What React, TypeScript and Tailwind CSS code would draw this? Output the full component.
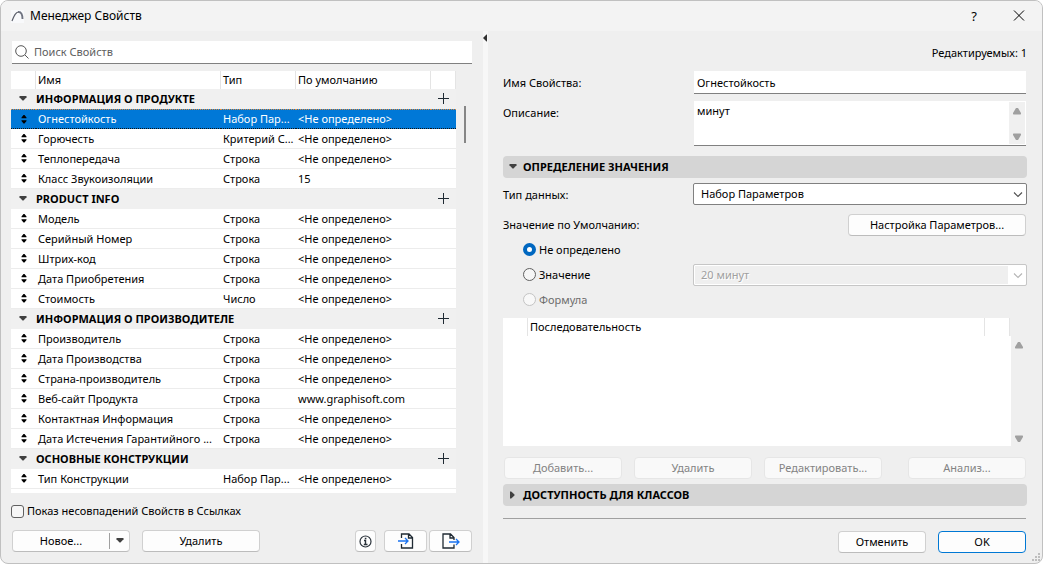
import { Fragment, useState } from "react";

const UNDEFINED = "<Не определено>";

const groups = [
  {
    title: "ИНФОРМАЦИЯ О ПРОДУКТЕ",
    rows: [
      { name: "Огнестойкость", type: "Набор Пар...", value: UNDEFINED },
      { name: "Горючесть", type: "Критерий С...", value: UNDEFINED },
      { name: "Теплопередача", type: "Строка", value: UNDEFINED },
      { name: "Класс Звукоизоляции", type: "Строка", value: "15" },
    ],
  },
  {
    title: "PRODUCT INFO",
    rows: [
      { name: "Модель", type: "Строка", value: UNDEFINED },
      { name: "Серийный Номер", type: "Строка", value: UNDEFINED },
      { name: "Штрих-код", type: "Строка", value: UNDEFINED },
      { name: "Дата Приобретения", type: "Строка", value: UNDEFINED },
      { name: "Стоимость", type: "Число", value: UNDEFINED },
    ],
  },
  {
    title: "ИНФОРМАЦИЯ О ПРОИЗВОДИТЕЛЕ",
    rows: [
      { name: "Производитель", type: "Строка", value: UNDEFINED },
      { name: "Дата Производства", type: "Строка", value: UNDEFINED },
      { name: "Страна-производитель", type: "Строка", value: UNDEFINED },
      { name: "Веб-сайт Продукта", type: "Строка", value: "www.graphisoft.com" },
      { name: "Контактная Информация", type: "Строка", value: UNDEFINED },
      { name: "Дата Истечения Гарантийного ...", type: "Строка", value: UNDEFINED },
    ],
  },
  {
    title: "ОСНОВНЫЕ КОНСТРУКЦИИ",
    rows: [{ name: "Тип Конструкции", type: "Набор Пар...", value: UNDEFINED }],
  },
];

const buttonStyle =
  "flex h-[22px] items-center justify-center rounded border border-[#d0d0d0] border-b-[#bcbcbc] bg-[#fdfdfd] disabled:border-[#e6e6e6] disabled:bg-[#f9f9f9] disabled:text-[#838383]";

function Triangle({ className }: { className?: string }) {
  return (
    <svg className={className} width="8" height="6" viewBox="0 0 8 6" fill="#404040">
      <path d="M.5 0h7v1.200L4.500 4.500h-1L.5 1.200z" />
    </svg>
  );
}

function ScrollArrow({ className }: { className?: string }) {
  return (
    <svg className={className} width="8" height="7" viewBox="0 0 8 7" fill="#a0a0a0">
      <path d="M3 0h2l3 5v1l-.5.5h-7L0 6V5z" />
    </svg>
  );
}

function Chevron({ color }: { color: string }) {
  return (
    <svg
      className="pointer-events-none absolute top-2 right-1"
      width="10"
      height="7"
      viewBox="0 0 10 7"
      fill="none"
      stroke={color}
      strokeWidth="1.1"
    >
      <path d="M1 1.500l4 4 4-4" />
    </svg>
  );
}

function PropertyTable() {
  const [selected, setSelected] = useState("Огнестойкость");

  return (
    <table className="w-full table-fixed border-separate border-spacing-0 bg-white">
      <colgroup>
        <col className="w-[25px]" />
        <col />
        <col className="w-[75px]" />
        <col className="w-[135px]" />
        <col className="w-[25px]" />
      </colgroup>
      <thead>
        <tr className="h-[18px] text-left">
          <th className="border-r border-[#e4e4e4] p-0" />
          <th className="border-r border-[#e4e4e4] p-0 pl-[2px] font-normal">Имя</th>
          <th className="border-r border-[#e4e4e4] p-0 pl-[2px] font-normal">Тип</th>
          <th className="border-r border-[#e4e4e4] p-0 pl-[2px] font-normal">По умолчанию</th>
          <th className="border-r border-[#e4e4e4] p-0" />
        </tr>
      </thead>
      <tbody>
        {groups.map((group) => (
          <Fragment key={group.title}>
            <tr className="h-5 bg-[#f0f0f0]">
              <td className="p-0">
                <Triangle className="ml-2" />
              </td>
              <th className="p-0 text-left font-bold" colSpan={3}>
                {group.title}
              </th>
              <td className="p-0">
                <button className="block pl-[6px]" type="button" aria-label="Добавить свойство">
                  <svg width="12" height="12" viewBox="0 0 12 12" stroke="#1f2a33">
                    <path d="M1 5.500h11M6.500 0v11" />
                  </svg>
                </button>
              </td>
            </tr>
            {group.rows.map((row) => {
              const active = row.name === selected;
              const line = active
                ? "border-y border-dotted border-t-[#e08a3c] border-b-[#111111] p-0"
                : "border-b border-[#ececec] p-0";
              return (
                <tr
                  className={active ? "h-5 bg-[#0078d7] text-white" : "h-5"}
                  key={row.name}
                  onClick={() => setSelected(row.name)}
                >
                  <td className={line}>
                    <svg className="ml-[10px]" width="6" height="9" viewBox="0 0 6 9" fill="#000000">
                      <path d="M2.500 0h1l2 2.500V3.200h-5V2.500zM.5 5.300h5V6L3.500 8.500h-1L.5 6z" />
                    </svg>
                  </td>
                  <td className={line}>
                    <div className="pl-[2px] whitespace-nowrap">{row.name}</div>
                  </td>
                  <td className={line}>
                    <div className="pl-[2px] whitespace-nowrap">{row.type}</div>
                  </td>
                  <td className={line}>
                    <div className="pl-[2px] whitespace-nowrap">{row.value}</div>
                  </td>
                  <td className={line} />
                </tr>
              );
            })}
          </Fragment>
        ))}
      </tbody>
    </table>
  );
}

function PropertyList() {
  return (
    <section className="flex min-w-0 flex-col pt-[10px] pr-[11px] pl-[10px]">
      <label className="ml-[1px] flex h-[23px] items-center gap-[5px] border-b border-[#808080] bg-white pl-[3px]">
        <svg width="14" height="14" viewBox="0 0 14 14" fill="none" stroke="#555555">
          <circle cx="6" cy="6" r="5.300" />
          <path d="M10 10l3.500 3.500" />
        </svg>
        <input
          className="min-w-0 flex-1 outline-none placeholder:text-[#606060]"
          type="text"
          aria-label="Поиск Свойств"
          placeholder="Поиск Свойств"
        />
      </label>

      <div className="mt-[7px] flex">
        <div className="min-w-0 flex-1 bg-white pb-1">
          <PropertyTable />
        </div>
        <div className="w-4 pt-[35px] pl-2">
          <div className="h-[37px] w-[2px] bg-[#868686]" />
        </div>
      </div>

      <label className="mt-[10px] flex h-4 items-center gap-[3px]">
        <input
          className="size-[13px] appearance-none rounded-[3px] border border-[#606060] bg-[#f6f6f6] checked:bg-[#0067c0]"
          type="checkbox"
        />
        Показ несовпадений Свойств в Ссылках
      </label>

      <div className="mt-[11px] ml-[1px] flex items-center">
        <div className={`${buttonStyle} w-[118px]`}>
          <button className="h-full flex-1" type="button">
            Новое...
          </button>
          <button
            className="my-[2px] flex h-4 w-5 items-center justify-center border-l border-[#a0a0a0]"
            type="button"
            aria-label="Варианты создания"
          >
            <Triangle />
          </button>
        </div>
        <button className={`${buttonStyle} ml-3 w-[118px]`} type="button">
          Удалить
        </button>
        <div className="ml-auto flex gap-[2px]">
          <button className={`${buttonStyle} mr-[6px] w-[21px]`} type="button" aria-label="Сведения">
            <svg className="shrink-0" width="13" height="13" viewBox="0 0 13 13" fill="none" stroke="#2b333b">
              <circle cx="6.500" cy="6.500" r="5.500" strokeWidth="1.200" />
              <path d="M5 5.500h1.500V10M4.800 9.500h3.700M5.800 3.500h1.600" strokeWidth="1.400" />
            </svg>
          </button>
          <button className={`${buttonStyle} w-[43px]`} type="button" aria-label="Импорт">
            <svg width="16" height="16" viewBox="0 0 16 16" fill="none" stroke="#1f2a33" strokeWidth="1.300">
              <path d="M3.500 5V1h7.500l3.500 3.500V15h-11v-4M10.500 1v4h4" />
              <path d="M0 8h10M7 5l3 3-3 3" stroke="#1a73f0" />
            </svg>
          </button>
          <button className={`${buttonStyle} w-[43px]`} type="button" aria-label="Экспорт">
            <svg width="18" height="16" viewBox="0 0 18 16" fill="none" stroke="#1f2a33" strokeWidth="1.300">
              <path d="M12 7V4.500L8.500 1H1v14h11v-3.500M8 1v4h4" />
              <path d="M7 9h10M14 6l3 3-3 3" stroke="#1a73f0" />
            </svg>
          </button>
        </div>
      </div>
    </section>
  );
}

function PropertyDetails() {
  const [valueMode, setValueMode] = useState("undefined");

  return (
    <section className="flex min-w-0 flex-col px-[15px] pt-3 pb-[10px]">
      <p className="h-5 text-right leading-5">Редактируемых: 1</p>

      <div className="mt-2 grid grid-cols-[190px_minmax(0,1fr)] gap-y-[7px]">
        <label className="leading-[23px]" htmlFor="name">
          Имя Свойства:
        </label>
        <input
          className="mx-[1px] h-[23px] border-b border-[#808080] bg-white px-[3px] outline-none"
          id="name"
          type="text"
          defaultValue="Огнестойкость"
        />
        <label className="leading-[23px]" htmlFor="description">
          Описание:
        </label>
        <div className="mx-[1px] flex h-[45px] border-b border-[#808080] bg-white">
          <textarea
            className="min-w-0 flex-1 resize-none overflow-hidden px-[3px] pt-[2px] outline-none"
            id="description"
            defaultValue="минут"
          />
          <div className="my-[1px] mr-[1px] flex w-4 flex-col items-center justify-between bg-[#f0f0f0] pt-[6px] pb-1">
            <ScrollArrow />
            <ScrollArrow className="rotate-180" />
          </div>
        </div>
      </div>

      <button
        className="mt-[10px] flex h-[22px] items-center gap-[6px] rounded bg-[#d5d5d5] pl-[6px] font-bold"
        type="button"
        aria-expanded="true"
      >
        <Triangle />
        ОПРЕДЕЛЕНИЕ ЗНАЧЕНИЯ
      </button>

      <div className="mt-[5px] grid grid-cols-[190px_minmax(0,1fr)]">
        <label className="leading-[23px]" htmlFor="data-type">
          Тип данных:
        </label>
        <div className="relative">
          <select
            className="block h-[22px] w-full appearance-none rounded-[2px] border border-[#808080] bg-white pl-[7px]"
            id="data-type"
          >
            <option>Набор Параметров</option>
          </select>
          <Chevron color="#505050" />
        </div>
      </div>

      <div className="mt-2 flex items-center justify-between">
        <span id="default-value">Значение по Умолчанию:</span>
        <button className={`${buttonStyle} mr-[1px] w-[178px]`} type="button">
          Настройка Параметров...
        </button>
      </div>

      <div
        className="mt-[1px] grid grid-cols-[190px_minmax(0,1fr)] items-center"
        role="radiogroup"
        aria-labelledby="default-value"
      >
        <label className="col-span-2 ml-5 flex h-[25px] items-center gap-[3px]">
          <input
            className="size-[13px] appearance-none rounded-full border border-[#606060] bg-[#f6f6f6] checked:border-4 checked:border-[#0067c0] checked:bg-white"
            type="radio"
            name="mode"
            checked={valueMode === "undefined"}
            onChange={() => setValueMode("undefined")}
          />
          Не определено
        </label>
        <label className="ml-5 flex h-[25px] items-center gap-[3px]">
          <input
            className="size-[13px] appearance-none rounded-full border border-[#606060] bg-[#f6f6f6] checked:border-4 checked:border-[#0067c0] checked:bg-white"
            type="radio"
            name="mode"
            checked={valueMode === "value"}
            onChange={() => setValueMode("value")}
          />
          Значение
        </label>
        <div className="relative">
          <select
            className="block h-[22px] w-full appearance-none rounded-[2px] border border-[#c6c6c6] bg-[#efefef] pl-[7px] text-[#a0a0a0] opacity-100 shadow-[inset_0_0_0_1px_#ffffff,inset_-18px_0_0_#ffffff] [text-shadow:1px_1px_#ffffff]"
            aria-label="Значение по Умолчанию"
            disabled
          >
            <option>20 минут</option>
          </select>
          <Chevron color="#b4b4b4" />
        </div>
        <label className="col-span-2 ml-5 flex h-[25px] items-center gap-[3px] text-[#6d6d6d]">
          <input
            className="size-[13px] appearance-none rounded-full border border-[#c4c4c4] bg-[#f8f8f8]"
            type="radio"
            name="mode"
            disabled
          />
          Формула
        </label>
      </div>

      <div className="mt-[6px] flex h-32">
        <div className="min-w-0 flex-1 bg-white">
          <table className="w-full table-fixed border-separate border-spacing-0">
            <thead>
              <tr className="h-[18px] text-left">
                <th className="w-[25px] border-r border-[#e4e4e4] p-0" />
                <th className="border-r border-[#e4e4e4] p-0 pl-[2px] font-normal">Последовательность</th>
                <th className="w-[25px] border-r border-[#e4e4e4] p-0" />
                <th className="w-[1px] bg-[#efefef] p-0" />
              </tr>
            </thead>
          </table>
        </div>
        <div className="flex w-4 flex-col items-center justify-between pt-6 pb-1">
          <ScrollArrow />
          <ScrollArrow className="rotate-180" />
        </div>
      </div>

      <div className="mt-[11px] flex gap-3 px-[1px]">
        <button className={`${buttonStyle} w-[118px]`} type="button" disabled>
          Добавить...
        </button>
        <button className={`${buttonStyle} w-[118px]`} type="button" disabled>
          Удалить
        </button>
        <button className={`${buttonStyle} w-[118px]`} type="button" disabled>
          Редактировать...
        </button>
        <button className={`${buttonStyle} ml-auto w-[118px]`} type="button" disabled>
          Анализ...
        </button>
      </div>

      <button
        className="mt-[5px] flex h-[22px] items-center gap-[6px] rounded bg-[#d5d5d5] pl-[6px] font-bold"
        type="button"
        aria-expanded="false"
      >
        <Triangle className="-rotate-90" />
        ДОСТУПНОСТЬ ДЛЯ КЛАССОВ
      </button>

      <hr className="mt-3 mr-[1px] border-[#a0a0a0]" />

      <div className="mt-3 flex justify-end gap-3 pr-[1px]">
        <button className={`${buttonStyle} w-[88px]`} type="button">
          Отменить
        </button>
        <button
          className="flex h-[22px] w-[88px] items-center justify-center rounded border border-[#0078d4] bg-[#fdfdfd]"
          type="button"
        >
          OK
        </button>
      </div>
    </section>
  );
}

export default function App() {
  return (
    <main className="relative flex min-h-screen flex-col overflow-hidden rounded-lg border border-[#c0c0c0] bg-[#efefef] font-['Noto_Sans','Open_Sans',sans-serif] text-[11px] leading-4 text-black">
      <header className="flex h-[30px] items-center bg-[#f3f3f3] pr-[17px] pl-[10px]">
        <svg width="13" height="13" viewBox="0 0 13 13" fill="none">
          <path d="M0 0h13v13H0z" fill="#f8f9fb" />
          <path d="M1 11C3 6 4.500 2 7.500 2" stroke="#5b5f6b" strokeWidth="1.200" />
          <path d="M7 2c3.500-.4 4.500 3 4.500 7" stroke="#6f7380" strokeWidth="1.900" />
        </svg>
        <h1 className="ml-[6px] flex-1 text-xs">Менеджер Свойств</h1>
        <button className="mr-9 text-[13px]" type="button" aria-label="Справка">
          ?
        </button>
        <button type="button" aria-label="Закрыть">
          <svg width="12" height="12" viewBox="0 0 12 12" stroke="#000000">
            <path d="M1 .5l10 10M11 .5l-10 10" />
          </svg>
        </button>
      </header>

      <div className="grid flex-1 grid-cols-[minmax(0,482fr)_5px_minmax(0,554fr)]">
        <PropertyList />
        <div className="bg-[#f7f7f7] pt-[3px]">
          <button className="block" type="button" aria-label="Свернуть список">
            <svg width="5" height="8" viewBox="0 0 5 8" fill="#303030">
              <path d="M0 4l3.500-3.500h.5v7h-.5z" />
            </svg>
          </button>
        </div>
        <PropertyDetails />
      </div>

      <svg className="absolute right-[2px] bottom-[2px]" width="8" height="8" viewBox="0 0 8 8" fill="#bdbdbd">
        <path d="M6 0h2v2H6zM3 3h2v2H3zM6 3h2v2H6zM0 6h2v2H0zM3 6h2v2H3zM6 6h2v2H6z" />
      </svg>
    </main>
  );
}
